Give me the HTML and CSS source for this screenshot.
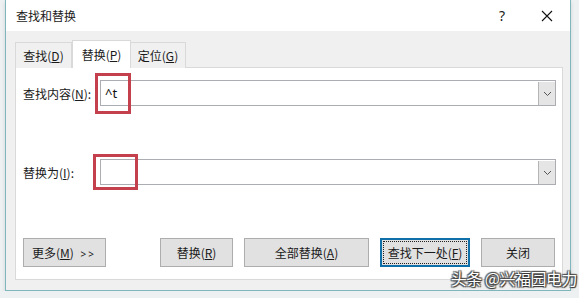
FILE: index.html
```html
<!DOCTYPE html>
<html lang="zh">
<head>
    <meta charset="UTF-8">
    <title>查找和替换</title>
    <link rel="stylesheet" href="styles.css">
</head>
<body>

<div class="window">
    <div class="titlebar">
        <span class="title">查找和替换</span>
        <span class="help">?</span>
        <span class="close">
            <svg width="12" height="12" viewBox="0 0 12 12"><path d="M1 1 L11 11 M11 1 L1 11" stroke="#111" stroke-width="1.1" fill="none"/></svg>
        </span>
    </div>

    <div class="dialog">
        <div class="tabs">
            <div class="tab tab-find">查找(<u>D</u>)</div>
            <div class="tab tab-replace active">替换(<u>P</u>)</div>
            <div class="tab tab-goto">定位(<u>G</u>)</div>
        </div>

        <div class="panel">
            <div class="field">
                <label for="find">查找内容(<u>N</u>):</label>
                <div class="combo">
                    <input type="text" id="find" value="^t">
                    <span class="drop"><svg width="9" height="6" viewBox="0 0 9 6"><path d="M1 1 L4.5 4.5 L8 1" stroke="#555" fill="none"/></svg></span>
                    <span class="mark mark-find"></span>
                </div>
            </div>

            <div class="field field-replace">
                <label for="replace">替换为(<u>I</u>):</label>
                <div class="combo">
                    <input type="text" id="replace" value="">
                    <span class="drop"><svg width="9" height="6" viewBox="0 0 9 6"><path d="M1 1 L4.5 4.5 L8 1" stroke="#555" fill="none"/></svg></span>
                    <span class="mark mark-replace"></span>
                </div>
            </div>

            <div class="buttons">
                <button class="btn btn-more">更多(<u>M</u>) <span class="arrows">&gt;&gt;</span></button>
                <button class="btn btn-replace">替换(<u>R</u>)</button>
                <button class="btn btn-all">全部替换(<u>A</u>)</button>
                <button class="btn btn-next">查找下一处(<u>F</u>)</button>
                <button class="btn btn-close">关闭</button>
            </div>
        </div>
    </div>

    <div class="watermark">头条 @兴福园电力</div>
</div>

</body>
</html>
```

FILE: styles.css
```css
* {
    box-sizing: border-box;
}

body {
    margin: 0;
    background-color: #eef1f1;
    font-family: "Noto Sans", "Noto Sans CJK SC", sans-serif;
    font-size: 12px;
    color: #1a1a1a;
}

.window {
    position: relative;
    margin-left: 5px;
    width: 566px;
    height: 291px;
    border: 1px solid #7fb5bc;
    border-top: none;
    background-color: #f0f0f0;
    box-shadow: 0 2px 4px rgba(0,0,0,0.12);
}

.titlebar {
    height: 31px;
    background-color: white;
    display: flex;
    align-items: center;
    padding-left: 10px;
}

.title {
    flex: 1;
    font-family: "Noto Sans CJK SC", sans-serif;
}

.help {
    width: 14px;
    text-align: center;
    font-size: 14px;
    margin-right: 32px;
}

.close {
    width: 12px;
    height: 12px;
    margin-right: 17px;
    display: flex;
}

.dialog {
    padding: 9px 7px 10px 9px;
}

.tabs {
    display: flex;
    align-items: flex-end;
    height: 28px;
    margin-bottom: -1px;
    position: relative;
    z-index: 1;
}

.tab {
    height: 26px;
    border: 1px solid #d9d9d9;
    border-bottom: none;
    background-color: #f0f0f0;
    display: flex;
    align-items: center;
    justify-content: center;
    font-family: "Noto Sans CJK SC", sans-serif;
}

.tab-find {
    width: 57px;
}

.tab-replace {
    width: 59px;
}

.tab-goto {
    width: 55px;
    border-left: none;
}

.tab.active {
    height: 28px;
    background-color: white;
}

.panel {
    height: 213px;
    background-color: white;
    border: 1px solid #d9d9d9;
    padding: 12px 6px 12px 7px;
    display: flex;
    flex-direction: column;
}

.field {
    display: flex;
    align-items: center;
    height: 26px;
}

.field-replace {
    margin-top: 53px;
}

label {
    width: 77px;
    font-family: "Noto Sans CJK SC", sans-serif;
}

.combo {
    position: relative;
    flex: 1;
    height: 26px;
    border: 1px solid #abadb3;
    display: flex;
}

.combo input {
    flex: 1;
    border: none;
    outline: none;
    padding: 0 4px;
    font-family: "Noto Sans", sans-serif;
    font-size: 13px;
    color: #111;
    background: transparent;
}

.drop {
    width: 17px;
    margin: 1px 0 0 0;
    background-color: #e5e5e5;
    border-left: 1px solid #b5b5b5;
    display: flex;
    align-items: center;
    justify-content: center;
}

.mark {
    position: absolute;
    border: 3px solid #c4404c;
}

.mark-find {
    left: -6px;
    top: -8px;
    width: 36px;
    height: 41px;
}

.mark-replace {
    left: -8px;
    top: -6px;
    width: 45px;
    height: 36px;
}

.buttons {
    margin-top: 53px;
    display: flex;
    gap: 11px;
}

.btn {
    height: 29px;
    border: 1px solid #adadad;
    background-color: #e1e1e1;
    font-family: "Noto Sans CJK SC", sans-serif;
    font-size: 12px;
    color: #1a1a1a;
    padding: 0;
}

.btn-more {
    width: 83px;
    text-align: left;
    padding-left: 8px;
    margin-right: 43px;
}

.arrows {
    font-family: "Noto Sans", sans-serif;
    font-size: 10px;
    letter-spacing: 2px;
    margin-left: 4px;
}

.btn-replace {
    width: 73px;
}

.btn-all {
    width: 125px;
}

.btn-next {
    width: 90px;
    border: 2px solid #0f6fa8;
    outline: 1px dotted #222;
    outline-offset: -4px;
}

.btn-close {
    width: 74px;
}

.watermark {
    position: absolute;
    right: -7px;
    bottom: 0;
    font-family: "Noto Sans CJK SC", sans-serif;
    font-size: 16px;
    letter-spacing: -0.5px;
    color: white;
    text-shadow: 0 0 1px #333, 1px 1px 1px #333, -1px -1px 1px #555, 1px -1px 1px #555, -1px 1px 1px #555;
    white-space: nowrap;
}
```
